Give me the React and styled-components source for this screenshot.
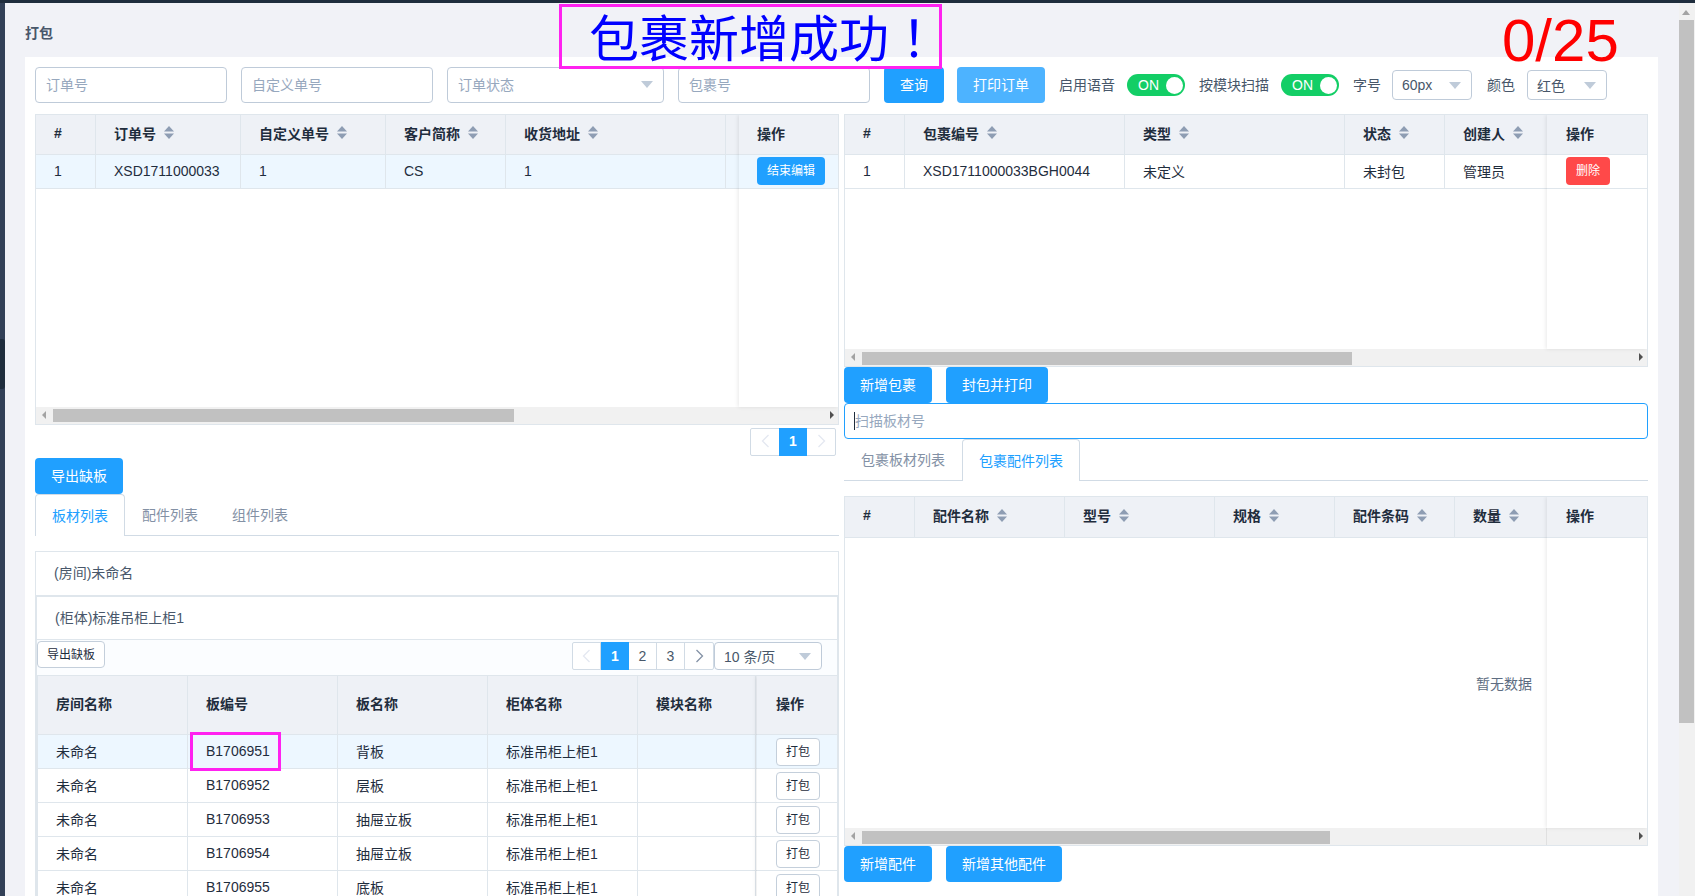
import React from 'react';
import styled, { createGlobalStyle } from 'styled-components';

const GlobalStyle = createGlobalStyle`
  html, body {
    margin: 0;
    padding: 0;
    height: 896px;
    overflow: hidden;
    background: #f1f2f7;
    font-family: "Liberation Sans", "Noto Sans CJK SC", sans-serif;
    font-size: 14px;
    color: #1f2d3d;
  }
  * { box-sizing: border-box; }
`;

const Shell = styled.div`
  display: flex;
  flex-direction: column;
  width: 1695px;
  height: 896px;
  overflow: hidden;
`;

const TopStrip = styled.div`
  height: 3px;
  flex: none;
  background: #1f2d3d;
`;

const Body = styled.div`
  display: flex;
  flex: 1;
  min-height: 0;
`;

const SideRail = styled.div`
  position: relative;
  width: 5px;
  flex: none;
  background: #324057;
`;

const RailHandle = styled.div`
  position: absolute;
  top: 336px;
  left: 0;
  width: 5px;
  height: 50px;
  background: #1f2d3d;
  border-radius: 0 3px 3px 0;
`;

const Main = styled.main`
  position: relative;
  flex: 1;
  min-width: 0;
  padding: 0 21px 0 20px;
`;

const PageTitle = styled.div`
  height: 54px;
  padding-top: 20px;
  line-height: 20px;
  font-size: 14px;
  font-weight: 700;
  color: #48576a;
`;

const Banner = styled.div`
  position: absolute;
  top: 1px;
  left: 554px;
  width: 383px;
  height: 65px;
  border: 3px solid #ff22f0;
  padding-left: 27px;
  font-size: 50px;
  line-height: 56px;
  color: #0000ff;
  white-space: nowrap;
  font-family: "Noto Sans CJK SC", sans-serif;
`;

const BannerMark = styled.span`
  font-family: "Noto Sans CJK TC", sans-serif;
`;

const Counter = styled.div`
  position: absolute;
  top: 5px;
  left: 1497px;
  font-size: 60px;
  line-height: 66px;
  color: #ff0000;
  font-family: "Liberation Sans", sans-serif;
`;

const Card = styled.section`
  background: #fff;
  padding: 10px 10px 0 10px;
  height: 900px;
`;

const Toolbar = styled.div`
  display: flex;
  align-items: center;
  height: 36px;
  margin-bottom: 11px;
`;

const TextInput = styled.input`
  width: ${p => p.$w}px;
  height: 36px;
  flex: none;
  margin-left: ${p => p.$ml || 0}px;
  padding: 0 10px;
  border: 1px solid #bfcbd9;
  border-radius: 4px;
  font: inherit;
  color: #1f2d3d;
  outline: none;
  &::placeholder { color: #97a8be; opacity: 1; }
`;

const SelectBox = styled.div`
  display: flex;
  align-items: center;
  justify-content: space-between;
  flex: none;
  width: ${p => p.$w}px;
  height: ${p => p.$h}px;
  margin-left: ${p => p.$ml || 0}px;
  padding: 0 10px ${p => (p.$placeholder ? 2 : 0)}px ${p => (p.$placeholder ? 10 : 9)}px;
  border: 1px solid #bfcbd9;
  border-radius: 4px;
  background: #fff;
  color: ${p => (p.$placeholder ? '#97a8be' : '#48576a')};
  white-space: nowrap;
`;

const SelectArrow = styled.i`
  display: block;
  width: 0;
  height: 0;
  border-left: 6px solid transparent;
  border-right: 6px solid transparent;
  border-top: 7px solid #bfcbd9;
`;

const Button = styled.button`
  display: inline-flex;
  align-items: center;
  justify-content: center;
  flex: none;
  width: ${p => p.$w}px;
  height: ${p => p.$h || 36}px;
  margin-left: ${p => p.$ml || 0}px;
  padding: 0 0 2px;
  border: 0;
  border-radius: 4px;
  background: ${p => p.$bg || '#20a0ff'};
  color: #fff;
  font: inherit;
  font-size: ${p => p.$fs || 14}px;
`;

const PlainButton = styled.button`
  display: inline-flex;
  align-items: center;
  justify-content: center;
  flex: none;
  width: ${p => p.$w}px;
  height: ${p => p.$h}px;
  padding: 0 0 2px;
  border: 1px solid #c4cfdb;
  border-radius: 4px;
  background: #fff;
  color: #1f2d3d;
  font: inherit;
  font-size: 12px;
`;

const FieldLabel = styled.span`
  flex: none;
  margin-left: ${p => p.$ml}px;
  padding-bottom: 2px;
  color: #48576a;
  white-space: nowrap;
`;

const SwitchBody = styled.div`
  display: flex;
  align-items: center;
  justify-content: space-between;
  flex: none;
  width: 58px;
  height: 22px;
  margin-left: ${p => p.$ml}px;
  padding: 0 2px 0 11px;
  border-radius: 11px;
  background: #13ce66;
  color: #fff;
`;

const SwitchKnob = styled.i`
  display: block;
  width: 17px;
  height: 17px;
  border-radius: 50%;
  background: #fff;
`;

const Columns = styled.div`
  display: grid;
  grid-template-columns: 804px 804px;
  column-gap: 5px;
`;

const Column = styled.div`
  display: flex;
  flex-direction: column;
  min-width: 0;
`;

const TableFrame = styled.div`
  display: flex;
  flex-direction: column;
  height: ${p => p.$h}px;
  border: 1px solid #dfe6ec;
  border-width: ${p => (p.$bare ? '1px 0 0 1px' : '1px')};
  background: #fff;
  overflow: hidden;
`;

const TableBody = styled.div`
  display: flex;
  flex: 1;
  min-height: 0;
`;

const ScrollPane = styled.div`
  position: relative;
  flex: 1;
  min-width: 0;
  overflow: hidden;
`;

const FixedPane = styled.div`
  position: relative;
  z-index: 1;
  flex: none;
  width: ${p => p.$w}px;
  background: #fff;
  box-shadow: -1px 0 4px rgba(0, 0, 0, 0.09);
`;

const Row = styled.div`
  display: grid;
  grid-template-columns: ${p => p.$cols};
  width: max-content;
  min-width: 100%;
  height: ${p => p.$h}px;
  border-bottom: 1px solid #dfe6ec;
  background: ${p => (p.$head ? '#eef1f6' : p.$active ? '#edf7ff' : '#fff')};
  font-weight: ${p => (p.$head ? 700 : 400)};
  color: #1f2d3d;
`;

const Cell = styled.div`
  position: relative;
  display: flex;
  align-items: center;
  min-width: 0;
  padding-left: ${p => p.$pl ?? 18}px;
  padding-bottom: ${p => (p.$head ? 4 : p.$flat ? 0 : 2)}px;
  border-right: ${p => (p.$noline ? '0' : '1px solid #dfe6ec')};
  white-space: nowrap;
  overflow: hidden;
`;

const HitMark = styled.div`
  position: absolute;
  left: 2px;
  top: -3px;
  width: 91px;
  height: 39px;
  border: 3px solid #ff22f0;
  pointer-events: none;
`;

const HitCell = styled(Cell)`
  overflow: visible;
`;

const EmptyState = styled.div`
  position: absolute;
  top: 177px;
  right: 15px;
  color: #5e6d82;
  line-height: 20px;
`;

const ScrollTrack = styled.div`
  position: relative;
  display: flex;
  align-items: center;
  flex: none;
  height: 17px;
  background: #f1f1f1;
  &::after {
    content: ${p => (p.$divider ? "''" : 'none')};
    position: absolute;
    top: 0;
    bottom: 0;
    right: 100px;
    width: 1px;
    background: #e0e0e0;
  }
`;

const ScrollThumb = styled.div`
  width: ${p => p.$w}px;
  height: 13px;
  margin-left: ${p => p.$ml}px;
  margin-top: ${p => (p.$low ? 2 : 0)}px;
  background: #c1c1c1;
`;

const TrackArrow = styled.i`
  position: absolute;
  top: 4px;
  ${p => (p.$right ? 'right: 4px;' : 'left: 6px;')}
  width: 0;
  height: 0;
  border-top: 4px solid transparent;
  border-bottom: 4px solid transparent;
  ${p => (p.$right
    ? 'border-left: 4px solid #505050;'
    : 'border-right: 4px solid #a3a3a3;')}
`;

const PagerRow = styled.div`
  display: flex;
  justify-content: flex-end;
  align-items: center;
  height: ${p => p.$h}px;
  padding: ${p => p.$pad};
`;

const Pager = styled.div`
  display: flex;
  flex: none;
  height: 28px;
  border: 1px solid #d1dbe5;
  border-radius: 2px;
  background: #fff;
`;

const PageCell = styled.div`
  display: flex;
  align-items: center;
  justify-content: center;
  width: ${p => p.$w || 28}px;
  margin: -1px 0;
  padding-bottom: 1px;
  border-right: ${p => (p.$line ? '1px solid #d1dbe5' : '0')};
  background: ${p => (p.$on ? '#20a0ff' : 'transparent')};
  color: ${p => (p.$on ? '#fff' : '#48576a')};
  font-weight: ${p => (p.$on ? 700 : 400)};
  font-size: 14px;
`;

const TabBar = styled.div`
  display: flex;
  align-items: flex-end;
  flex: none;
  height: ${p => p.$h}px;
  border-bottom: 1px solid #d1dbe5;
  margin-bottom: ${p => p.$mb}px;
`;

const Tab = styled.div`
  display: flex;
  align-items: center;
  justify-content: center;
  height: ${p => (p.$on ? 'calc(100% + 1px)' : '100%')};
  margin-bottom: ${p => (p.$on ? '-1px' : '0')};
  padding: 0 16px 2px;
  color: ${p => (p.$on ? '#20a0ff' : '#8391a5')};
  white-space: nowrap;
  background: ${p => (p.$on ? '#fff' : 'transparent')};
  border: 1px solid ${p => (p.$on ? '#d1dbe5' : 'transparent')};
  border-bottom: 0;
  border-radius: 4px 4px 0 0;
`;

const ButtonRow = styled.div`
  display: flex;
  flex: none;
  height: 36px;
`;

const ScanWrap = styled.div`
  position: relative;
  flex: none;
`;

const ScanInput = styled(TextInput)`
  display: block;
  border-color: #20a0ff;
`;

const Caret = styled.i`
  position: absolute;
  left: 10px;
  top: 9px;
  width: 1px;
  height: 18px;
  background: #1f2d3d;
`;

const Panel = styled.div`
  border: 1px solid #dfe6ec;
  background: #fff;
`;

const PanelHead = styled.div`
  display: flex;
  align-items: center;
  height: ${p => p.$h}px;
  padding: 0 0 3px 18px;
  border-bottom: 1px solid #dfe6ec;
  color: #48576a;
`;

const InnerPanel = styled(Panel)`
  border-width: 1px 1px 0 1px;
`;

const SubBar = styled.div`
  display: flex;
  align-items: flex-start;
  justify-content: space-between;
  height: 35px;
  padding: 1px 15px 0 0;
  background: #fbfdff;
`;

const SubPager = styled.div`
  display: flex;
  height: 28px;
  margin-top: 1px;
`;

const PageScroll = styled.div`
  position: relative;
  flex: none;
  width: 16px;
  background: #f1f1f1;
`;

const PageThumb = styled.div`
  position: absolute;
  top: 17px;
  left: 0;
  width: 15px;
  height: 703px;
  background: #c1c1c1;
`;

const PageUp = styled.i`
  position: absolute;
  top: 7px;
  left: 3px;
  width: 0;
  height: 0;
  border-left: 4px solid transparent;
  border-right: 4px solid transparent;
  border-bottom: 5px solid #a3a3a3;
`;

const SortIcon = () => (
  <svg width="10" height="13" viewBox="0 0 10 13" style={{ marginLeft: 8, flex: 'none' }}>
    <path d="M5 0 L10 5.5 H0 Z" fill="#8e9db3" />
    <path d="M5 13 L0 7.5 H10 Z" fill="#8e9db3" />
  </svg>
);

const Chevron = ({ dir, color }) => (
  <svg width="9" height="14" viewBox="0 0 9 14">
    <path
      d={dir === 'left' ? 'M7.5 1 L1.5 7 L7.5 13' : 'M1.5 1 L7.5 7 L1.5 13'}
      fill="none"
      stroke={color}
      strokeWidth="1.3"
    />
  </svg>
);

const gridOf = cols => cols.map(c => `${c}px`).join(' ');

const HeadCells = ({ titles, sortable }) =>
  titles.map((t, i) => (
    <Cell key={i} $head>
      {t}
      {sortable && t && t !== '#' && <SortIcon />}
    </Cell>
  ));

const Scrollbar = ({ thumb, ml, divider, low }) => (
  <ScrollTrack $divider={divider}>
    <TrackArrow />
    <ScrollThumb $w={thumb} $ml={ml} $low={low} />
    <TrackArrow $right />
  </ScrollTrack>
);

const orderCols = [60, 145, 145, 120, 220, 120];
const parcelCols = [60, 220, 220, 100, 103];
const partCols = [70, 150, 150, 120, 120, 93];
const boardCols = [150, 150, 150, 150, 118];

const boards = [
  ['未命名', 'B1706951', '背板', '标准吊柜上柜1', ''],
  ['未命名', 'B1706952', '层板', '标准吊柜上柜1', ''],
  ['未命名', 'B1706953', '抽屉立板', '标准吊柜上柜1', ''],
  ['未命名', 'B1706954', '抽屉立板', '标准吊柜上柜1', ''],
  ['未命名', 'B1706955', '底板', '标准吊柜上柜1', ''],
];

const OrderTable = () => (
  <TableFrame $h={311}>
    <TableBody>
      <ScrollPane>
        <Row $head $h={40} $cols={gridOf(orderCols)}>
          <HeadCells titles={['#', '订单号', '自定义单号', '客户简称', '收货地址', '']} sortable />
        </Row>
        <Row $active $h={34} $cols={gridOf(orderCols)}>
          <Cell>1</Cell>
          <Cell>XSD1711000033</Cell>
          <Cell>1</Cell>
          <Cell>CS</Cell>
          <Cell>1</Cell>
          <Cell />
        </Row>
      </ScrollPane>
      <FixedPane $w={99}>
        <Row $head $h={40} $cols="99px"><Cell $head $noline>操作</Cell></Row>
        <Row $active $h={34} $cols="99px">
          <Cell $noline><Button $w={68} $h={28} $fs={12}>结束编辑</Button></Cell>
        </Row>
      </FixedPane>
    </TableBody>
    <Scrollbar thumb={461} ml={17} />
  </TableFrame>
);

const ParcelTable = () => (
  <TableFrame $h={253}>
    <TableBody>
      <ScrollPane>
        <Row $head $h={40} $cols={gridOf(parcelCols)}>
          <HeadCells titles={['#', '包裹编号', '类型', '状态', '创建人']} sortable />
        </Row>
        <Row $h={34} $cols={gridOf(parcelCols)}>
          <Cell>1</Cell>
          <Cell>XSD1711000033BGH0044</Cell>
          <Cell>未定义</Cell>
          <Cell>未封包</Cell>
          <Cell>管理员</Cell>
        </Row>
      </ScrollPane>
      <FixedPane $w={100}>
        <Row $head $h={40} $cols="100px"><Cell $head $pl={19} $noline>操作</Cell></Row>
        <Row $h={34} $cols="100px">
          <Cell $pl={19} $noline><Button $w={44} $h={28} $fs={12} $bg="#ff4949">删除</Button></Cell>
        </Row>
      </FixedPane>
    </TableBody>
    <Scrollbar thumb={490} ml={17} low />
  </TableFrame>
);

const PartTable = () => (
  <TableFrame $h={350}>
    <TableBody>
      <ScrollPane>
        <Row $head $h={41} $cols={gridOf(partCols)}>
          <HeadCells titles={['#', '配件名称', '型号', '规格', '配件条码', '数量']} sortable />
        </Row>
        <EmptyState>暂无数据</EmptyState>
      </ScrollPane>
      <FixedPane $w={100}>
        <Row $head $h={41} $cols="100px"><Cell $head $pl={19} $noline>操作</Cell></Row>
      </FixedPane>
    </TableBody>
    <Scrollbar thumb={468} ml={17} divider low />
  </TableFrame>
);

const BoardTable = () => (
  <TableFrame $bare $h={240}>
    <TableBody>
      <ScrollPane>
        <Row $head $h={59} $cols={gridOf(boardCols)}>
          <HeadCells titles={['房间名称', '板编号', '板名称', '柜体名称', '模块名称']} />
        </Row>
        {boards.map((b, i) => (
          <Row key={b[1]} $active={i === 0} $h={34} $cols={gridOf(boardCols)}>
            <Cell>{b[0]}</Cell>
            {i === 0 ? (
              <HitCell>{b[1]}<HitMark /></HitCell>
            ) : (
              <Cell>{b[1]}</Cell>
            )}
            <Cell>{b[2]}</Cell>
            <Cell>{b[3]}</Cell>
            <Cell />
          </Row>
        ))}
      </ScrollPane>
      <FixedPane $w={80}>
        <Row $head $h={59} $cols="80px"><Cell $head $pl={19} $noline>操作</Cell></Row>
        {boards.map((b, i) => (
          <Row key={b[1]} $active={i === 0} $h={34} $cols="80px">
            <Cell $flat $pl={19} $noline><PlainButton $w={44} $h={28}>打包</PlainButton></Cell>
          </Row>
        ))}
      </FixedPane>
    </TableBody>
  </TableFrame>
);

export default function App() {
  return (
    <Shell>
      <GlobalStyle />
      <TopStrip />
      <Body>
        <SideRail><RailHandle /></SideRail>
        <Main>
          <PageTitle>打包</PageTitle>
          <Banner>包裹新增成功<BannerMark>！</BannerMark></Banner>
          <Counter>0/25</Counter>
          <Card>
            <Toolbar>
              <TextInput $w={192} placeholder="订单号" readOnly />
              <TextInput $w={192} $ml={14} placeholder="自定义单号" readOnly />
              <SelectBox $w={217} $h={36} $ml={14} $placeholder>订单状态<SelectArrow /></SelectBox>
              <TextInput $w={192} $ml={14} placeholder="包裹号" readOnly />
              <Button $w={60} $ml={14}>查询</Button>
              <Button $w={88} $ml={13} $bg="#4db3ff">打印订单</Button>
              <FieldLabel $ml={14}>启用语音</FieldLabel>
              <SwitchBody $ml={12}>ON<SwitchKnob /></SwitchBody>
              <FieldLabel $ml={14}>按模块扫描</FieldLabel>
              <SwitchBody $ml={12}>ON<SwitchKnob /></SwitchBody>
              <FieldLabel $ml={14}>字号</FieldLabel>
              <SelectBox $w={80} $h={30} $ml={11}>60px<SelectArrow /></SelectBox>
              <FieldLabel $ml={15}>颜色</FieldLabel>
              <SelectBox $w={80} $h={30} $ml={12}>红色<SelectArrow /></SelectBox>
            </Toolbar>
            <Columns>
              <Column>
                <OrderTable />
                <PagerRow $h={33} $pad="0 3px 0 0">
                  <Pager>
                    <PageCell><Chevron dir="left" color="#e4e8f1" /></PageCell>
                    <PageCell $on>1</PageCell>
                    <PageCell><Chevron dir="right" color="#e4e8f1" /></PageCell>
                  </Pager>
                </PagerRow>
                <ButtonRow><Button $w={88}>导出缺板</Button></ButtonRow>
                <TabBar $h={42} $mb={15}>
                  <Tab $on>板材列表</Tab>
                  <Tab>配件列表</Tab>
                  <Tab>组件列表</Tab>
                </TabBar>
                <Panel>
                  <PanelHead $h={44}>(房间)未命名</PanelHead>
                  <InnerPanel>
                    <PanelHead $h={43}>(柜体)标准吊柜上柜1</PanelHead>
                    <SubBar>
                      <PlainButton $w={68} $h={27}>导出缺板</PlainButton>
                      <SubPager>
                        <Pager>
                          <PageCell $line><Chevron dir="left" color="#e4e8f1" /></PageCell>
                          <PageCell $on>1</PageCell>
                          <PageCell $line>2</PageCell>
                          <PageCell $line>3</PageCell>
                          <PageCell><Chevron dir="right" color="#8391a5" /></PageCell>
                        </Pager>
                        <SelectBox $w={108} $h={28}>10 条/页<SelectArrow /></SelectBox>
                      </SubPager>
                    </SubBar>
                    <BoardTable />
                  </InnerPanel>
                </Panel>
              </Column>
              <Column>
                <ParcelTable />
                <ButtonRow>
                  <Button $w={88}>新增包裹</Button>
                  <Button $w={102} $ml={14}>封包并打印</Button>
                </ButtonRow>
                <ScanWrap>
                  <ScanInput $w={804} placeholder="扫描板材号" readOnly />
                  <Caret />
                </ScanWrap>
                <TabBar $h={42} $mb={15}>
                  <Tab>包裹板材列表</Tab>
                  <Tab $on>包裹配件列表</Tab>
                </TabBar>
                <PartTable />
                <ButtonRow>
                  <Button $w={88}>新增配件</Button>
                  <Button $w={116} $ml={14}>新增其他配件</Button>
                </ButtonRow>
              </Column>
            </Columns>
          </Card>
        </Main>
        <PageScroll>
          <PageUp />
          <PageThumb />
        </PageScroll>
      </Body>
    </Shell>
  );
}
